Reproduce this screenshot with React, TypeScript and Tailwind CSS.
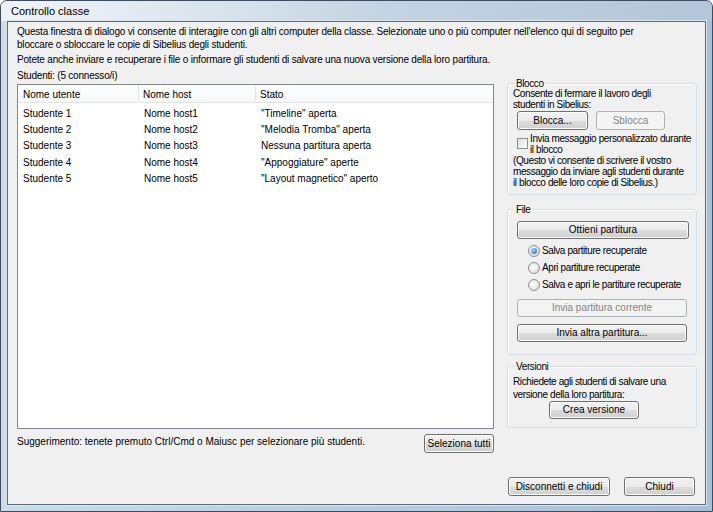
import React from "react";

const font = { fontFamily: '"Liberation Sans", Arial, sans-serif' };

function Btn({ children, className = "", disabled = false }: { children: React.ReactNode; className?: string; disabled?: boolean }) {
  return (
    <div
      className={
        "flex items-center justify-center rounded-[3px] border text-[10px] leading-none whitespace-nowrap " +
        (disabled
          ? "border-[#adb2b5] bg-[#f4f4f4] text-[#838383] "
          : "border-[#707070] bg-[linear-gradient(to_bottom,#f2f2f2_0%,#ebebeb_50%,#dddddd_50%,#cfcfcf_100%)] text-black shadow-[inset_0_0_0_1px_#fcfcfc] ") +
        className
      }
    >
      {children}
    </div>
  );
}

function Radio({ checked, label }: { checked?: boolean; label: string }) {
  return (
    <div className="flex h-[17px] items-center gap-[2px] whitespace-nowrap">
      <span className="flex h-[12px] w-[12px] shrink-0 items-center justify-center rounded-full border border-[#8e8f8f] bg-[radial-gradient(circle_at_40%_40%,#ffffff,#d4d4d4)]">
        {checked && <span className="h-[6px] w-[6px] rounded-full bg-[radial-gradient(circle_at_35%_35%,#9ad6ff,#0f5fb8)]" />}
      </span>
      <span>{label}</span>
    </div>
  );
}

function Group({ label, children, className = "" }: { label: string; children: React.ReactNode; className?: string }) {
  return (
    <fieldset className={"rounded-[3px] border border-[#d5dfe5] px-[4px] shadow-[inset_1px_1px_0_#ffffff] " + className}>
      <legend className="ml-[3px] px-[1px] leading-[11px]">{label}</legend>
      {children}
    </fieldset>
  );
}

const rows = [
  ["Studente 1", "Nome host1", "\"Timeline\" aperta"],
  ["Studente 2", "Nome host2", "\"Melodia Tromba\" aperta"],
  ["Studente 3", "Nome host3", "Nessuna partitura aperta"],
  ["Studente 4", "Nome host4", "\"Appoggiature\" aperte"],
  ["Studente 5", "Nome host5", "\"Layout magnetico\" aperto"],
];

export default function App() {
  return (
    <div style={font} className="h-[512px] w-[713px] bg-white text-[10px] text-black">
      <div className="flex h-[512px] w-[713px] flex-col rounded-t-[7px] border border-[#3d4d5f] bg-[linear-gradient(to_right,#cfdbe7_0%,#bccde0_45%,#a9bfd6_100%)]">
        <div className="flex h-[20px] shrink-0 items-center rounded-t-[6px] bg-[linear-gradient(to_right,#eef3f7_0%,#e2eaf1_20%,#c4d3e1_55%,#b3c6d9_100%)] pl-[10px] text-[11px] leading-none">
          Controllo classe
        </div>
        <div className="mx-[6px] mb-[6px] flex flex-1 flex-col border border-[#5a6b7d] bg-[#f0f0f0] shadow-[0_0_0_1px_#dbe5ee]">
          <div className="pl-[9px] pr-[8px] pt-[3px] leading-[13px] tracking-[-0.2px]">
            <p>
              Questa finestra di dialogo vi consente di interagire con gli altri computer della classe. Selezionate uno o più computer nell'elenco qui di seguito per
              <br />
              bloccare o sbloccare le copie di Sibelius degli studenti.
            </p>
            <p className="mt-[2px]">Potete anche inviare e recuperare i file o informare gli studenti di salvare una nuova versione della loro partitura.</p>
            <p className="mt-[3px]">Studenti: (5 connesso/i)</p>
          </div>
          <div className="flex flex-1 pl-[9px] pr-[7px]">
            <div className="flex w-[477px] flex-col pt-[2px]">
              <div className="h-[345px] border border-[#828790] bg-white">
                <div className="flex h-[18px] items-center border-b border-[#e5e5e5] bg-[linear-gradient(to_bottom,#ffffff,#f7f8fa)]">
                  <div className="w-[121px] border-r border-[#e5e5e5] pl-[5px] pt-[1px] leading-[17px]">Nome utente</div>
                  <div className="w-[117px] border-r border-[#e5e5e5] pl-[4px] pt-[1px] leading-[17px]">Nome host</div>
                  <div className="pl-[4px] pt-[1px]">Stato</div>
                </div>
                <div className="pt-[2px]">
                  {rows.map((r) => (
                    <div key={r[0]} className="flex h-[16.3px] items-center">
                      <div className="w-[121px] pl-[5px]">{r[0]}</div>
                      <div className="w-[117px] pl-[5px]">{r[1]}</div>
                      <div className="pl-[5px]">{r[2]}</div>
                    </div>
                  ))}
                </div>
              </div>
              <div className="mt-[5px] flex items-start justify-between">
                <span>Suggerimento: tenete premuto Ctrl/Cmd o Maiusc per selezionare più studenti.</span>
                <Btn className="h-[19px] w-[70px]">Seleziona tutti</Btn>
              </div>
            </div>
            <div className="ml-[13px] flex w-[190px] flex-col tracking-[-0.4px]">
              <Group label="Blocco" className="-mt-[4px] pb-[6px]">
                <div className="-mt-[1px] whitespace-nowrap pl-[1px] leading-[11px]">
                  Consente di fermare il lavoro degli
                  <br />
                  studenti in Sibelius:
                </div>
                <div className="mt-[1px] flex gap-[8px] pl-[5px] tracking-normal">
                  <Btn className="h-[19px] w-[71px]">Blocca...</Btn>
                  <Btn disabled className="h-[19px] w-[69px]">Sblocca</Btn>
                </div>
                <div className="mt-[3px] flex items-start whitespace-nowrap pl-[5px] leading-[11px]">
                  <span className="mr-[2px] mt-[5px] h-[11px] w-[11px] shrink-0 border border-[#8e8f8f] bg-[linear-gradient(135deg,#dcdcdc,#ffffff)]" />
                  <span>
                    Invia messaggio personalizzato durante
                    <br />
                    il blocco
                  </span>
                </div>
                <div className="whitespace-nowrap pl-[1px] leading-[11px]">
                  (Questo vi consente di scrivere il vostro
                  <br />
                  messaggio da inviare agli studenti durante
                  <br />
                  il blocco delle loro copie di Sibelius.)
                </div>
              </Group>
              <Group label="File" className="mt-[9px] pb-[12px]">
                <div className="pl-[5px] pr-[2px] pt-[6px]">
                  <Btn className="h-[18px] w-[172px] tracking-normal">Ottieni partitura</Btn>
                  <div className="mt-[3px] pl-[11px]">
                    <Radio checked label="Salva partiture recuperate" />
                    <Radio label="Apri partiture recuperate" />
                    <Radio label="Salva e apri le partiture recuperate" />
                  </div>
                  <Btn disabled className="mt-[6px] h-[18px] w-[170px] tracking-normal">Invia partitura corrente</Btn>
                  <Btn className="mt-[7px] h-[18px] w-[170px] tracking-normal">Invia altra partitura...</Btn>
                </div>
              </Group>
              <Group label="Versioni" className="mt-[6px] pb-[8px]">
                <div className="whitespace-nowrap pl-[1px] pt-[3px] leading-[13px]">
                  Richiedete agli studenti di salvare una
                  <br />
                  versione della loro partitura:
                </div>
                <div className="pl-[37px]">
                  <Btn className="h-[18px] w-[90px] tracking-normal">Crea versione</Btn>
                </div>
              </Group>
              <div className="mb-[8px] mt-auto flex gap-[14px] pl-[1px] tracking-normal">
                <Btn className="h-[19px] w-[102px]">Disconnetti e chiudi</Btn>
                <Btn className="h-[19px] w-[71px]">Chiudi</Btn>
              </div>
            </div>
          </div>
        </div>
      </div>
    </div>
  );
}
